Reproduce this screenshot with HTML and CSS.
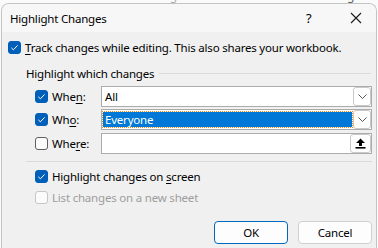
FILE: index.html
```html
<!DOCTYPE html>
<html lang="en">
<head>
    <meta charset="UTF-8">
    <title>Highlight Changes</title>
    <link rel="stylesheet" href="styles.css">
</head>
<body>
    <div class="ribbon">
        <span class="rib-a">Allow Edit</span>
        <span class="rib-b">Ranges</span>
        <span class="rib-c">Hide</span>
        <span class="rib-d">Track Changes</span>
    </div>

    <div class="dialog">
        <div class="titlebar">
            <span class="title">Highlight Changes</span>
            <span class="help">?</span>
            <svg class="close" width="12" height="12" viewBox="0 0 12 12">
                <path d="M1 1 L11 11 M11 1 L1 11" stroke="#1a1a1a" stroke-width="1.1" fill="none"/>
            </svg>
        </div>

        <div class="content">
            <div class="row track">
                <span class="check on"></span>
                <span class="text"><u>T</u>rack changes while editing. This also shares your workbook.</span>
            </div>

            <div class="group-head">
                <span>Highlight which changes</span>
                <span class="rule"></span>
            </div>

            <div class="field-row">
                <span class="check on"></span>
                <span class="label">Whe<u>n</u>:</span>
                <div class="field">
                    <span class="value">All</span>
                    <span class="drop"><svg width="9" height="5" viewBox="0 0 9 5"><path d="M0.5 0.5 L4.5 4.5 L8.5 0.5" stroke="#555" fill="none"/></svg></span>
                </div>
            </div>

            <div class="field-row who">
                <span class="check on"></span>
                <span class="label">Wh<u>o</u>:</span>
                <div class="field">
                    <span class="value selected">Everyone</span>
                    <span class="drop"><svg width="9" height="5" viewBox="0 0 9 5"><path d="M0.5 0.5 L4.5 4.5 L8.5 0.5" stroke="#555" fill="none"/></svg></span>
                </div>
            </div>

            <div class="field-row where">
                <span class="check"></span>
                <span class="label">Whe<u>r</u>e:</span>
                <div class="field">
                    <span class="value"></span>
                    <span class="pick"><svg width="11" height="11" viewBox="0 0 11 11"><path d="M5.5 0.5 L10 5 L7 5 L7 8 L4 8 L4 5 L1 5 Z" fill="#000"/><rect x="0.5" y="9" width="10" height="1.6" fill="#000"/></svg></span>
                </div>
            </div>

            <div class="separator"></div>

            <div class="row screen">
                <span class="check on"></span>
                <span class="text">Highlight changes on <u>s</u>creen</span>
            </div>

            <div class="row list disabled">
                <span class="check"></span>
                <span class="text">List changes on a new sheet</span>
            </div>

            <div class="buttons">
                <button class="btn default">OK</button>
                <button class="btn">Cancel</button>
            </div>
        </div>
    </div>
</body>
</html>
```

FILE: styles.css
```css
html, body {
    margin: 0;
    padding: 0;
    background: #fafafa;
    overflow: hidden;
    font-family: "Noto Sans", "Open Sans", sans-serif;
    font-size: 11.5px;
    letter-spacing: -0.2px;
    color: #000;
}
u {
    text-decoration-thickness: 1px;
    text-underline-offset: 2px;
}

/* spreadsheet ribbon peeking out above the dialog */
.ribbon {
    height: 3px;
    overflow: hidden;
    position: relative;
    color: #555;
}
.ribbon span {
    position: absolute;
    top: -12px;
}
.rib-a { left: 80px; }
.rib-b { left: 150px; color: #aaa; }
.rib-c { left: 230px; }
.rib-d { left: 290px; }

.dialog {
    margin-left: 1px;
    width: 376px;
    height: 245px;
    box-sizing: border-box;
    border: 1px solid #c4c4c4;
    border-bottom: none;
    border-radius: 8px 8px 0 0;
    background: #f0f0f0;
    overflow: hidden;
}

.titlebar {
    height: 28px;
    display: flex;
    align-items: center;
    background: #f7f7f7;
    padding-left: 8px;
}
.title {
    flex: 1;
}
.help {
    width: 12px;
    margin-right: 32px;
    font-size: 13px;
}
.close {
    margin-right: 14px;
}

.content {
    padding-left: 6px;
}

.row {
    display: flex;
    align-items: center;
    height: 20px;
}
.check {
    box-sizing: border-box;
    width: 13px;
    height: 13px;
    border: 1px solid #5f5f5f;
    border-radius: 3px;
    background: #fbfbfb;
    flex: none;
}
.check.on {
    border-color: #005fb8;
    background: #005fb8 url("data:image/svg+xml;utf8,<svg xmlns='http://www.w3.org/2000/svg' width='13' height='13' viewBox='0 0 13 13'><path d='M3.3 6.8 L5.4 8.8 L9.6 4.4' stroke='white' stroke-width='1' fill='none'/></svg>") no-repeat -1px -1px;
}

.track {
    margin-top: 5px;
}
.track .check {
    margin-right: 4px;
}

.group-head {
    display: flex;
    align-items: center;
    height: 16px;
    margin-top: 8px;
    margin-left: 18px;
}
.group-head .rule {
    flex: 1;
    height: 1px;
    background: #dadada;
    margin-left: 5px;
    margin-right: 5px;
}

.field-row {
    display: flex;
    align-items: center;
    height: 21px;
    margin-left: 27px;
    margin-top: 5px;
}
.field-row.who { margin-top: 2px; }
.field-row.where { margin-top: 3px; }
.field-row .check {
    margin-right: 4px;
}
.label {
    width: 49px;
}
.field {
    box-sizing: border-box;
    width: 271px;
    height: 21px;
    border: 1px solid #acacac;
    background: #fff;
    display: flex;
    align-items: center;
}
.value {
    flex: 1;
    height: 15px;
    line-height: 15px;
    padding-left: 2px;
    margin-left: 1px;
}
.value.selected {
    background: #0078d7;
    color: #fff;
    outline: 1px dotted #f08a24;
    margin-right: 1px;
}
.drop, .pick {
    box-sizing: border-box;
    width: 18px;
    height: 19px;
    border: 1px solid #c9c9c9;
    border-radius: 3px;
    display: flex;
    align-items: center;
    justify-content: center;
    background: #fff;
}
.pick {
    width: 21px;
}

.separator {
    height: 1px;
    background: #dadada;
    margin: 7px 4px 0 18px;
}

.screen {
    margin-top: 4px;
    margin-left: 27px;
}
.screen .check, .list .check {
    margin-right: 4px;
}
.list {
    margin-left: 27px;
    margin-top: 1px;
}
.disabled {
    color: #9d9d9d;
}
.disabled .check {
    border-color: #c6c6c6;
}

.buttons {
    display: flex;
    justify-content: flex-end;
    gap: 10px;
    margin-top: 14px;
    margin-right: 4px;
}
.btn {
    box-sizing: border-box;
    width: 74px;
    height: 23px;
    border: 1px solid #d0d0d0;
    border-radius: 4px;
    background: #fdfdfd;
    font-family: inherit;
    font-size: 11.5px;
    letter-spacing: -0.2px;
    color: #000;
    padding: 0;
}
.btn.default {
    border: 1px solid #0067c0;
}
```
